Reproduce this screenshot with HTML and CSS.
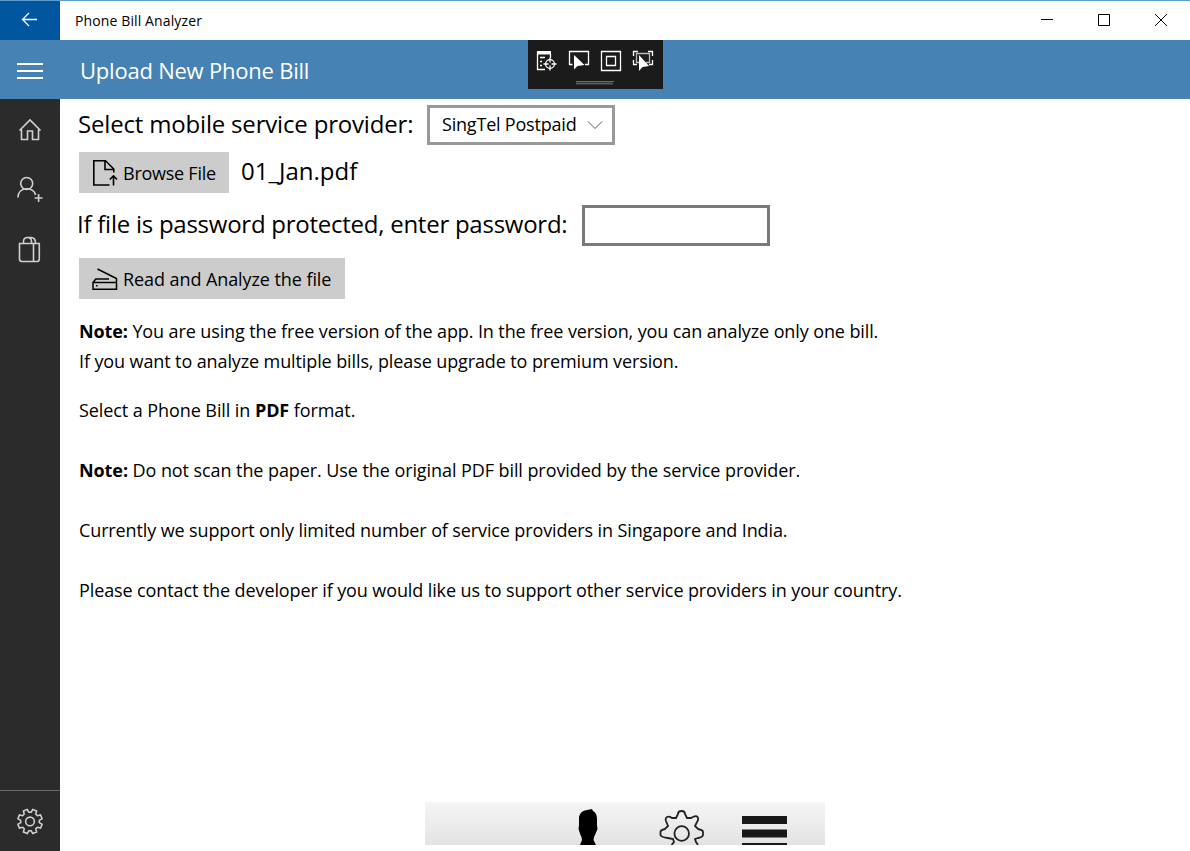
FILE: index.html
```
<!DOCTYPE html>
<html lang="en">
<head>
  <meta charset="UTF-8">
  <meta name="viewport" content="width=device-width, initial-scale=1.0">
  <title>Phone Bill Analyzer</title>
  <link rel="stylesheet" href="styles.css">
</head>
<body>
  <div class="window">
    <div class="titlebar">
      <button class="back" aria-label="Back">
        <svg width="60" height="39" viewBox="0 0 60 39"><path d="M22.5 18.5H37M29 12L22.5 18.5L29 25"/></svg>
      </button>
      <span class="app-name">Phone Bill Analyzer</span>
      <div class="window-buttons">
        <svg width="57" height="39" viewBox="0 0 57 39"><path d="M23 18.5H35"/></svg>
        <svg width="57" height="39" viewBox="0 0 57 39"><path d="M23.5 13.5H34.5V24.5H23.5Z"/></svg>
        <svg width="57" height="39" viewBox="0 0 57 39"><path d="M23 13L35 25M35 13L23 25"/></svg>
      </div>
    </div>

    <header class="header">
      <button class="menu" aria-label="Menu">
        <svg width="60" height="59" viewBox="0 0 60 59"><path d="M17 24H43M17 31H43M17 38H43"/></svg>
      </button>
      <h1>Upload New Phone Bill</h1>
      <div class="debug-bar">
        <svg width="135" height="49" viewBox="0 0 135 49">
          <!-- live tree -->
          <path class="solid" d="M9 11H23V14.5H9Z"/>
          <path d="M9.5 12V29.5H17M22.5 14V18M12 17.5H17M12 21.5H14M12 25.5H14"/>
          <circle cx="22" cy="24" r="4.4"/>
          <path d="M22 17.5V22.5M22 25.5V30.5M15.5 24H20.5M23.5 24H28.5"/>
          <!-- select element -->
          <path d="M44.5 24.5H41.5V11.5H60.5V24.5H57"/>
          <path class="solid" d="M46 15V29.5L49.5 26L56.5 25Z"/>
          <!-- layout adorners -->
          <path d="M73.5 11.5H92.5V30.5H73.5ZM78.5 16.5H87.5V25.5H78.5Z"/>
          <!-- track focus -->
          <path d="M105.5 16V11.5H110M120 11.5H124.5V16M105.5 20V24.5H109M121 24.5H124.5V20"/>
          <path class="dim" d="M111 22.5H108.5V13.5H121.5V22.5H118"/>
          <path class="solid" d="M111 15V31L114.5 27L121 26Z"/>
          <path class="grip" d="M48 41.5H86"/>
          <path class="grip-low" d="M48 43.5H85"/>
        </svg>
      </div>
    </header>

    <div class="body">
      <nav class="sidebar">
        <svg width="60" height="60" viewBox="0 0 60 60"><path d="M19.5 31.5L30 21L40.5 31.5M21.5 30.5V40.5H27.5V32H32.5V40.5H38.5V30.5"/></svg>
        <svg width="60" height="60" viewBox="0 0 60 60"><circle cx="26.7" cy="24.5" r="6"/><path d="M18 38.5C18 27 34 27.5 35.5 36M38.6 35V43M34.6 39H42.6"/></svg>
        <svg width="60" height="60" viewBox="0 0 60 60"><path d="M19.5 24.5H39.3V40Q39.3 42.5 37 42.5H22Q19.5 42.5 19.5 40ZM33.5 24.5V42.5M23.5 24V22Q24 18.5 27.5 18.5T31.5 22V24M27.5 18.5H31Q35.5 18.5 35.5 24"/></svg>
        <div class="settings">
          <svg width="60" height="60" viewBox="-1 -1 62 62">
            <path d="M28.8 20.9H31.2L32.9 18L36.8 19.6L36 22.9L37.6 24.5L40.9 23.7L42.5 27.6L39.6 29.3V31.7L42.5 33.4L40.9 37.3L37.6 36.5L36 38.1L36.8 41.4L32.9 43L31.2 40.1H28.8L27.1 43L23.2 41.4L24 38.1L22.4 36.5L19.1 37.3L17.5 33.4L20.4 31.7V29.3L17.5 27.6L19.1 23.7L22.4 24.5L24 22.9L23.2 19.6L27.1 18Z"/>
            <circle cx="30" cy="30.5" r="4.5"/>
          </svg>
        </div>
      </nav>

      <main class="content">
        <div class="row provider">
          <label class="label-provider">Select mobile service provider:</label>
          <div class="select">
            <span>SingTel Postpaid</span>
            <svg width="16" height="10" viewBox="0 0 16 10"><path d="M1 1.5L8 8.5L15 1.5"/></svg>
          </div>
        </div>

        <div class="row browse">
          <button class="btn btn-browse">
            <svg width="26" height="28" viewBox="0 0 26 28"><path d="M17.5 26H1.8V1.8H13.5L21.8 10V13.5M13 2V10.5H21.8M21.5 26.5V17M17.8 20.5L21.5 16.8L25 20.5"/></svg>
            <span>Browse File</span>
          </button>
          <span class="file-name">01_Jan.pdf</span>
        </div>

        <div class="row password">
          <label class="label-password" for="password">If file is password protected, enter password:</label>
          <input type="password" id="password">
        </div>

        <div class="row analyze">
          <button class="btn btn-analyze">
            <svg width="26" height="28" viewBox="0 0 26 28"><path d="M5.500 4L24.500 13.500V24.300H1V17.500H24.500M1 17.500L3.800 14H17M4 20.800H5.500"/></svg>
            <span>Read and Analyze the file</span>
          </button>
        </div>

        <div class="notes">
          <p class="line-1"><b>Note:</b> You are using the free version of the app. In the free version, you can analyze only one bill.</p>
          <p class="line-2">If you want to analyze multiple bills, please upgrade to premium version.</p>
          <p class="line-3">Select a Phone Bill in <b>PDF</b> format.</p>
          <p class="line-4"><b>Note:</b> Do not scan the paper. Use the original PDF bill provided by the service provider.</p>
          <p class="line-5">Currently we support only limited number of service providers in Singapore and India.</p>
          <p class="line-6">Please contact the developer if you would like us to support other service providers in your country.</p>
        </div>

        <div class="ad">
          <svg width="400" height="43" viewBox="0 0 400 43">
            <path class="ad-fill" d="M154 15Q155 9 162 8L167 7L168 9Q172 11 172 17V23L172.5 27L170 33Q168.500 35 168.500 38L171 43H155L157 38Q157 35 155.500 33L153.500 27L154 23Z"/>
            <path class="ad-line" d="M246.5 43L249 40L248 37L243 36Q235.5 35 235.5 33V30Q235.5 28 240 27L243 24L241 19Q240 16 242 15Q244 14 247 16L251 16L253 12Q253 9 256.5 9T260 12L262 16L266 16Q271 13 272.5 15T272 20L270 24L273 27Q278 28 278 30V33Q278 35 273 36L270 37L271 40L273 43"/>
            <circle class="ad-line" cx="256.7" cy="31.5" r="7.3"/>
            <path class="ad-bars" d="M317 14H362V22H317ZM317 27.5H362V35.5H317ZM317 41H362V43H317Z"/>
          </svg>
        </div>
      </main>
    </div>
  </div>
</body>
</html>
```

FILE: styles.css
```
* {
  box-sizing: border-box;
}

body {
  margin: 0;
  background-color: #fff;
  color: #000;
  font-family: "Open Sans", "Noto Sans", sans-serif;
  overflow: hidden;
}

h1,
p {
  margin: 0;
  font-weight: 400;
}

button {
  border: none;
  padding: 0;
  font-family: inherit;
  color: inherit;
}

svg {
  display: block;
  flex: none;
  fill: none;
  stroke: currentColor;
}

.window {
  display: flex;
  flex-direction: column;
  height: 851px;
  white-space: nowrap;
}

/* Title bar */
.titlebar {
  display: flex;
  align-items: center;
  height: 40px;
  border-top: 1px solid #5b9bd0;
}

.back {
  width: 60px;
  height: 39px;
  background-color: #0057a0;
  color: #fff;
}

.back svg {
  stroke-width: 1.3;
}

.app-name {
  margin-left: 15px;
  font-size: 14px;
  letter-spacing: 0.12px;
}

.window-buttons {
  display: flex;
  margin-left: auto;
  padding-right: 1px;
}

/* Page header */
.header {
  position: relative;
  display: flex;
  align-items: center;
  height: 59px;
  background-color: #4682b4;
  color: #fff;
}

.menu {
  width: 60px;
  height: 59px;
  background: none;
}

.menu svg {
  stroke-width: 2;
}

.header h1 {
  margin-left: 20px;
  font-size: 22px;
  letter-spacing: -0.22px;
}

.debug-bar {
  position: absolute;
  top: 0;
  left: 528px;
  background-color: #1b1b1b;
}

.debug-bar svg {
  stroke-width: 1.3;
}

.debug-bar .solid {
  fill: #fff;
  stroke: none;
}

.debug-bar .dim {
  stroke: #bbb;
}

.debug-bar .grip {
  stroke: #686868;
  stroke-width: 1;
}

.debug-bar .grip-low {
  stroke: #5a5a5a;
  stroke-width: 2;
}

.body {
  display: flex;
  flex: 1;
  min-height: 0;
}

/* Navigation */
.sidebar {
  display: flex;
  flex-direction: column;
  width: 60px;
  background-color: #2b2b2b;
  color: #d0d0d0;
}

.sidebar svg {
  stroke-width: 1.6;
}

.settings {
  height: 61px;
  margin-top: auto;
  border-top: 1px solid #6b6b6b;
}

/* Form */
.content {
  display: flex;
  flex-direction: column;
  flex: 1;
  padding: 6px 0 6px 19px;
}

.row {
  display: flex;
  align-items: center;
  font-size: 24px;
}

.provider {
  height: 40px;
}

.browse {
  height: 41px;
  margin-top: 7px;
}

.password {
  height: 41px;
  margin-top: 12px;
}

.analyze {
  height: 41px;
  margin-top: 12px;
}

.label-provider {
  width: 349px;
  margin-left: -1px;
  padding-bottom: 3px;
  letter-spacing: -0.18px;
}

.label-password {
  width: 505px;
  margin-left: -2px;
  padding-bottom: 5px;
  letter-spacing: -0.25px;
}

.select {
  display: flex;
  align-items: center;
  justify-content: space-between;
  width: 188px;
  height: 40px;
  padding: 0 9px 0 12px;
  border: 3px solid #999;
  font-size: 18px;
  letter-spacing: -0.2px;
}

.select span {
  padding-bottom: 2px;
}

.select svg {
  color: #555;
}

.btn {
  display: flex;
  align-items: center;
  gap: 5px;
  width: 150px;
  height: 41px;
  padding-left: 13px;
  background-color: #ccc;
  font-size: 18px;
}

.btn svg {
  stroke-width: 1.6;
}

.btn-browse {
  letter-spacing: -0.25px;
}

.btn-analyze {
  width: 266px;
  letter-spacing: -0.08px;
}

.btn-analyze svg {
  stroke-width: 1.5;
}

.file-name {
  margin-left: 12px;
  padding-bottom: 5px;
}

input {
  width: 188px;
  height: 41px;
  padding: 0 10px;
  border: 3px solid #7a7a7a;
  background-color: #fff;
}

.notes {
  margin-top: 17px;
  font-size: 18px;
  line-height: 30px;
  letter-spacing: -0.11px;
}

.notes b {
  font-weight: 700;
}

.line-3 {
  margin-top: 19px;
  letter-spacing: -0.08px;
}

.line-4,
.line-5,
.line-6 {
  margin-top: 30px;
}

.line-4 {
  letter-spacing: -0.08px;
}

.line-5 {
  letter-spacing: -0.12px;
}

/* Banner */
.ad {
  width: 400px;
  height: 43px;
  margin: auto auto 0 346px;
  background: linear-gradient(#f4f4f4, #ededed 50%, #e2e2e2);
}

.ad-fill {
  fill: #000;
  stroke: none;
}

.ad-line {
  stroke: #222;
  stroke-width: 1.8;
}

.ad-bars {
  fill: #181818;
  stroke: none;
}
```
